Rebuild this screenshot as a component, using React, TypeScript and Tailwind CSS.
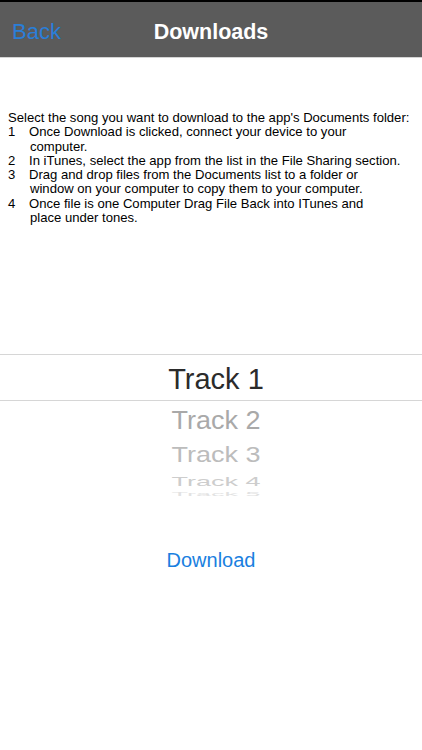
export default function App() {
  const steps = [
    { n: "1", lines: ["Once Download is clicked, connect your device to your", "computer."] },
    { n: "2", lines: ["In iTunes, select the app from the list in the File Sharing section."] },
    { n: "3", lines: ["Drag and drop files from the Documents list to a folder or", "window on your computer to copy them to your computer."] },
    { n: "4", lines: ["Once file is one Computer Drag File Back into ITunes and", "place under tones."] },
  ];

  return (
    <div className="w-[422px] h-[750px] bg-white overflow-hidden font-['Liberation_Sans',Arial,sans-serif]">
      {/* nav bar */}
      <div className="border-t-2 border-black">
        <div className="relative h-[56px] bg-[#5b5b5b] border-b border-[#d4d4d4] flex items-center justify-center pt-[4px]">
          <button className="absolute left-[12px] top-[17px] text-[22px] leading-[26px] text-[#2a7ed8]">Back</button>
          <h1 className="text-[21.5px] font-bold text-white leading-[26px]">Downloads</h1>
        </div>
      </div>

      {/* instructions */}
      <div className="pt-[53px] px-[8px] text-[13.1px] leading-[14.3px] text-black">
        <p>Select the song you want to download to the app's Documents folder:</p>
        {steps.map((s) => (
          <div key={s.n} className="flex">
            <span className="w-[21px] shrink-0">{s.n}</span>
            <div>
              {s.lines.map((l, i) => (
                <p key={i} className={i > 0 ? "pl-[1px]" : ""}>{l}</p>
              ))}
            </div>
          </div>
        ))}
      </div>

      {/* picker */}
      <div className="mt-[129px] flex flex-col items-center">
        <div className="w-full h-[47px] border-y border-[#d6d6d6] flex items-center justify-center pl-[10px] pt-[4px]">
          <span className="text-[29px] leading-none text-[#2b2b2b]">Track 1</span>
        </div>
        <div className="h-[38px] flex items-center justify-center pl-[10px]">
          <span className="text-[27px] leading-none text-[#a9a9a9] scale-y-[0.95]">Track 2</span>
        </div>
        <div className="h-[32px] flex items-center justify-center pl-[10px]">
          <span className="text-[27px] leading-none text-[#bcbcbc] scale-y-[0.8]">Track 3</span>
        </div>
        <div className="h-[20px] flex items-center justify-center pl-[10px]">
          <span className="text-[27px] leading-none text-[#cdcdcd] scale-y-[0.5]">Track 4</span>
        </div>
        <div className="h-[6px] flex items-center justify-center overflow-hidden pl-[10px]">
          <span className="text-[27px] leading-none text-[#e2e2e2] scale-y-[0.2]">Track 5</span>
        </div>
      </div>

      {/* action */}
      <div className="mt-[51px] flex justify-center">
        <button className="text-[20px] leading-[24px] text-[#1a7fe0]">Download</button>
      </div>
    </div>
  );
}
